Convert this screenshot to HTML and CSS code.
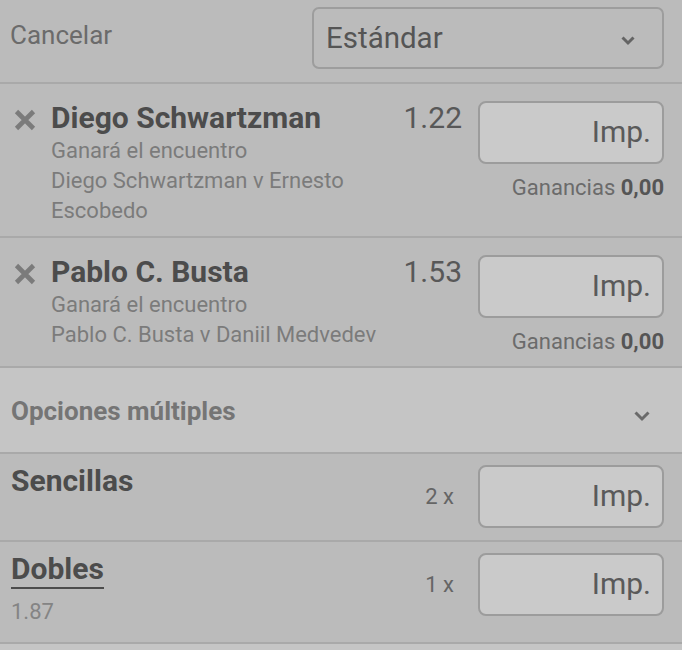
FILE: index.html
```html
<!DOCTYPE html>
<html lang="es">
<head>
<meta charset="utf-8">
<title>Boleto</title>
<link rel="stylesheet" href="styles.css">
</head>
<body>
<div class="slip">
  <header class="top">
    <span class="cancel">Cancelar</span>
    <div class="select">
      <span class="select-label">Estándar</span>
      <svg class="chev" width="16" height="11" viewBox="0 0 16 11"><path d="M2.5 2.5 L8 8 L13.5 2.5" fill="none" stroke="#646464" stroke-width="3"/></svg>
    </div>
  </header>

  <section class="bet bet-first">
    <svg class="remove" width="24" height="24" viewBox="0 0 24 24"><path d="M3.5 3.5 L20.5 20.5 M20.5 3.5 L3.5 20.5" stroke="#7b7b7b" stroke-width="4.6" stroke-linecap="butt"/></svg>
    <div class="info">
      <div class="name">Diego Schwartzman</div>
      <div class="sub">Ganará el encuentro</div>
      <div class="sub">Diego Schwartzman v Ernesto Escobedo</div>
    </div>
    <div class="odds">1.22</div>
    <div class="stake">
      <div class="amount">Imp.</div>
      <div class="winnings">Ganancias <b>0,00</b></div>
    </div>
  </section>

  <section class="bet">
    <svg class="remove" width="24" height="24" viewBox="0 0 24 24"><path d="M3.5 3.5 L20.5 20.5 M20.5 3.5 L3.5 20.5" stroke="#7b7b7b" stroke-width="4.6" stroke-linecap="butt"/></svg>
    <div class="info">
      <div class="name">Pablo C. Busta</div>
      <div class="sub">Ganará el encuentro</div>
      <div class="sub">Pablo C. Busta v Daniil Medvedev</div>
    </div>
    <div class="odds">1.53</div>
    <div class="stake">
      <div class="amount">Imp.</div>
      <div class="winnings">Ganancias <b>0,00</b></div>
    </div>
  </section>

  <section class="multi">
    <span class="multi-title">Opciones múltiples</span>
    <svg class="chev chev-multi" width="18" height="12" viewBox="0 0 18 12"><path d="M2.5 2.5 L9 9 L15.5 2.5" fill="none" stroke="#6a6a6a" stroke-width="3"/></svg>
  </section>

  <section class="combo combo-single">
    <div class="combo-info">
      <div class="combo-name">Sencillas</div>
    </div>
    <div class="mult">2 x</div>
    <div class="amount amount-combo">Imp.</div>
  </section>

  <section class="combo combo-double">
    <div class="combo-info">
      <div class="combo-name underlined">Dobles</div>
      <div class="combo-odds">1.87</div>
    </div>
    <div class="mult">1 x</div>
    <div class="amount amount-combo">Imp.</div>
  </section>

  <div class="tail"></div>
</div>
</body>
</html>
```

FILE: styles.css
```css
* { box-sizing: border-box; }

html, body {
  margin: 0;
  padding: 0;
  background: #bbbbbb;
}

body {
  font-family: Roboto, "Noto Sans", sans-serif;
  color: #4f4f4f;
  width: 682px;
  height: 650px;
  overflow: hidden;
}

.slip {
  display: flex;
  flex-direction: column;
}

/* Header */
.top {
  height: 84px;
  display: flex;
  align-items: center;
  justify-content: space-between;
  padding: 0 18px 6px 10px;
  border-bottom: 2px solid #a9a9a9;
}

.cancel {
  font-size: 26px;
  color: #6b6b6b;
  margin-bottom: 6px;
}

.select {
  width: 352px;
  height: 62px;
  border: 2px solid #9d9d9d;
  border-radius: 7px;
  display: flex;
  align-items: center;
  justify-content: space-between;
  padding: 0 26px 0 12px;
}

.select-label {
  font-size: 29.5px;
  color: #555555;
}

.chev { display: block; }
.select .chev { margin-top: 4px; }

/* Bets */
.bet {
  display: flex;
  align-items: flex-start;
  padding: 17px 18px 10px 13px;
  border-bottom: 2px solid #a9a9a9;
}

.remove {
  flex: none;
  margin-top: 7px;
  margin-right: 14px;
}

.info {
  flex: 1;
  min-width: 0;
}

.name {
  font-size: 30px;
  font-weight: 700;
  line-height: 32px;
  color: #4c4c4c;
  margin-top: 1px;
}

.sub {
  font-size: 22px;
  line-height: 30px;
  color: #7b7b7b;
}

.name + .sub { margin-top: 2px; }

.odds {
  font-size: 30px;
  line-height: 32px;
  color: #585858;
  margin-top: 1px;
  margin-right: 16px;
  margin-left: 6px;
}

.stake {
  width: 186px;
  flex: none;
  display: flex;
  flex-direction: column;
  align-items: flex-end;
}

.amount {
  width: 186px;
  height: 63px;
  border: 2px solid #9c9c9c;
  border-radius: 8px;
  background: #cacaca;
  display: flex;
  align-items: center;
  justify-content: flex-end;
  padding: 0 11px 2px 0;
  font-size: 30px;
  color: #5a5a5a;
  flex: none;
}

.winnings {
  font-size: 22px;
  line-height: 28px;
  margin-top: 10px;
  color: #6b6b6b;
}

.winnings b { color: #555555; font-weight: 700; }

/* Multiple options band */
.multi {
  height: 86px;
  background: #c5c5c5;
  border-bottom: 2px solid #a9a9a9;
  display: flex;
  align-items: center;
  justify-content: space-between;
  padding: 2px 31px 0 11px;
}

.multi-title {
  font-size: 26px;
  font-weight: 700;
  color: #757575;
}

.chev-multi { margin-top: 9px; }

/* Combination rows */
.combo {
  display: flex;
  align-items: flex-start;
  padding: 11px 18px 12px 11px;
  border-bottom: 2px solid #a9a9a9;
}

.combo-double { padding-bottom: 15px; }

.combo-info {
  flex: 1;
}

.combo-name {
  font-size: 30px;
  font-weight: 700;
  line-height: 32px;
  color: #4c4c4c;
}

.underlined {
  display: inline-block;
  border-bottom: 2px solid #4c4c4c;
  padding-bottom: 2px;
}

.combo-odds {
  font-size: 22px;
  line-height: 30px;
  color: #848484;
  margin-top: 8px;
}

.mult {
  font-size: 22px;
  line-height: 63px;
  color: #656565;
  margin-right: 24px;
}

.tail {
  height: 8px;
  background: #c5c5c5;
}
```
